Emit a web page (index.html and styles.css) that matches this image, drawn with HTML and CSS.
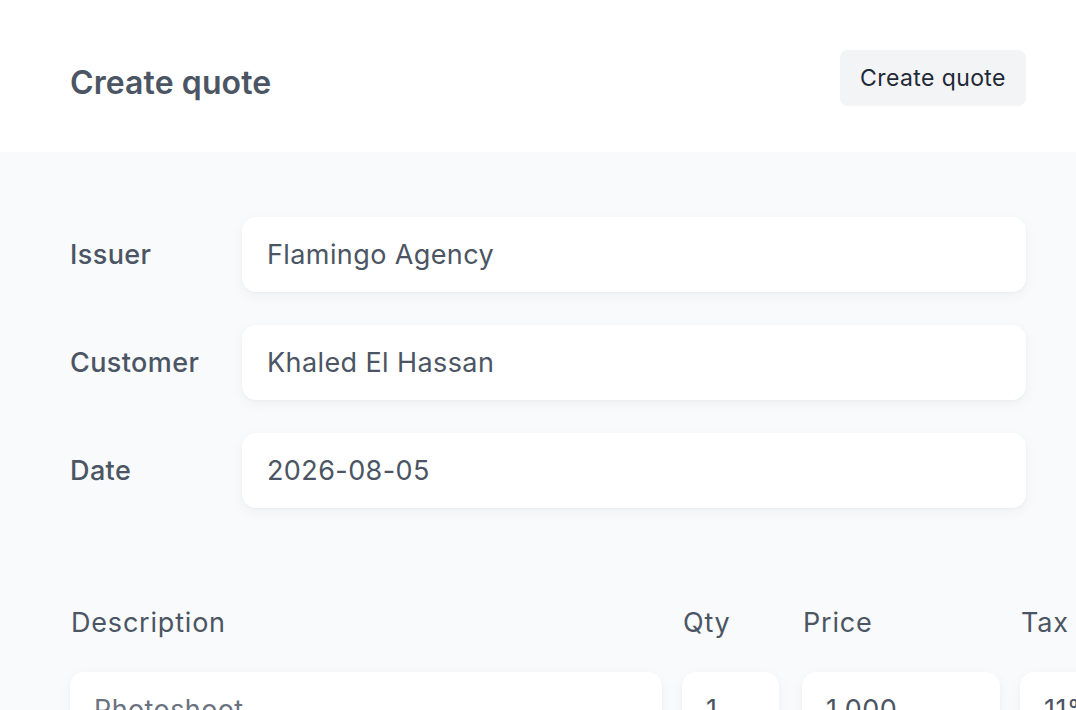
FILE: index.html
```html
<!DOCTYPE html>
<html lang="en">
<head>
<meta charset="utf-8">
<title>Create quote</title>
<link rel="stylesheet" href="styles.css">
</head>
<body>
<header class="topbar">
  <h1 class="title">Create quote</h1>
  <button class="btn" type="button">Create quote</button>
</header>
<main class="panel">
  <section class="fields">
    <label class="label">Issuer</label>
    <div class="input">Flamingo Agency</div>
    <label class="label">Customer</label>
    <div class="input">Khaled El Hassan</div>
    <label class="label">Date</label>
    <div class="input">2026-08-05</div>
  </section>
  <section class="items">
    <div class="col-head">Description</div>
    <div class="col-head">Qty</div>
    <div class="col-head">Price</div>
    <div class="col-head">Tax rate</div>
    <div class="input cell muted">Photoshoot</div>
    <div class="input cell qty">1</div>
    <div class="input cell">1,000</div>
    <div class="input cell">11%</div>
  </section>
</main>
</body>
</html>
```
FILE: styles.css
```css
html, body {
  margin: 0;
  padding: 0;
  background: #ffffff;
  overflow: hidden;
  width: 1076px;
  height: 710px;
  font-family: Inter, "Noto Sans", "Liberation Sans", sans-serif;
  color: #4b5563;
}

.topbar {
  height: 152px;
  box-sizing: border-box;
  display: flex;
  align-items: center;
  justify-content: space-between;
  padding: 0 50px 0 70px;
}

.title {
  margin: 0;
  margin-top: 12px;
  font-size: 32px;
  font-weight: 600;
  color: #4b5563;
  letter-spacing: 0.1px;
}

.btn {
  width: 186px;
  height: 56px;
  margin-top: 4px;
  border: none;
  border-radius: 8px;
  background: #f3f4f6;
  color: #1f2937;
  font-family: Inter, "Noto Sans", "Liberation Sans", sans-serif;
  font-size: 23px;
  font-weight: 400;
  letter-spacing: 0.4px;
  padding: 0;
}

.panel {
  background: #f9fafb;
  padding: 65px 50px 0 70px;
  min-height: 600px;
  border-bottom-left-radius: 28px;
}

.fields {
  display: grid;
  grid-template-columns: 172px 1fr;
  grid-auto-rows: 75px;
  row-gap: 33px;
  align-items: center;
}

.label {
  font-size: 27px;
  font-weight: 500;
  color: #4b5563;
  letter-spacing: 0.4px;
}

.input {
  height: 75px;
  box-sizing: border-box;
  background: #ffffff;
  border-radius: 14px;
  box-shadow: 0 4px 14px rgba(17, 24, 39, 0.045), 0 1px 3px rgba(17, 24, 39, 0.03);
  display: flex;
  align-items: center;
  padding-left: 25px;
  font-size: 27px;
  font-weight: 400;
  letter-spacing: 0.4px;
  color: #4b5563;
  white-space: nowrap;
  overflow: hidden;
}

.items {
  margin-top: 99px;
  display: grid;
  grid-template-columns: 592px 100px 198px 200px;
  column-gap: 20px;
  grid-template-rows: 32px 75px;
  row-gap: 33px;
  width: 1170px;
}

.col-head {
  font-size: 27px;
  line-height: 32px;
  font-weight: 400;
  letter-spacing: 0.8px;
  color: #4b5563;
  padding-left: 1px;
  white-space: nowrap;
}

.cell {
  padding-left: 24px;
}

.cell.qty {
  width: 97px;
}

.muted {
  color: #6b7280;
}
```
